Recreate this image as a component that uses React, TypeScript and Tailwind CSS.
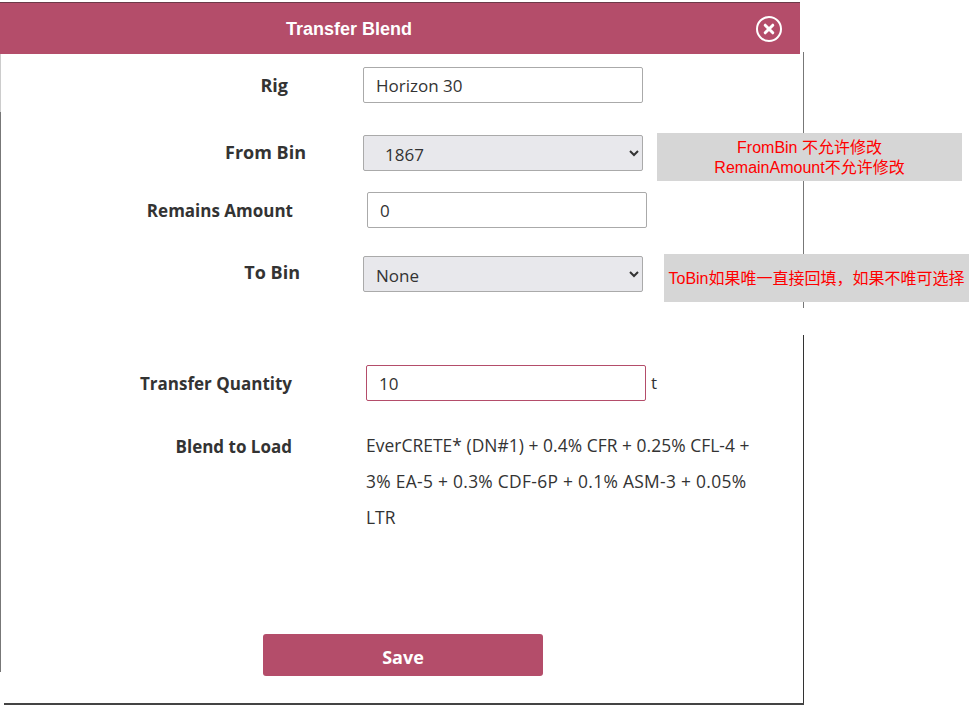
function Label({ children, className }: { children: string; className: string }) {
  return <div className={`font-bold text-[#333] whitespace-nowrap text-right ${className}`}>{children}</div>;
}

export default function App() {
  return (
    <div className="relative w-[972px] h-[705px] overflow-hidden bg-white text-[17px] text-[#333] font-['Open_Sans','Noto_Sans_CJK_SC',sans-serif]">
      <div className="w-[804px] h-[705px] pt-[2px] flex flex-col">
        {/* Header */}
        <div className="w-[800px] h-[52px] shrink-0 bg-[#b44d6a] border-t border-[#6b3a48] flex items-center">
          <h1 className="ml-[286px] mt-[1px] text-[18px] font-bold text-white font-['Liberation_Sans',sans-serif]">Transfer Blend</h1>
          <button className="ml-auto mr-[18px] w-[26px] h-[26px] rounded-full border-2 border-white flex items-center justify-center text-white">
            <svg width="12" height="12" viewBox="0 0 12 12">
              <path d="M2.2 2.2 L9.8 9.8 M9.8 2.2 L2.2 9.8" stroke="currentColor" strokeWidth="3" strokeLinecap="round" />
            </svg>
          </button>
        </div>

        {/* Form */}
        <div className="flex items-center mt-[13px] h-[36px]">
          <Label className="w-[288px] text-[18px]">Rig</Label>
          <input readOnly defaultValue="Horizon 30" className="ml-[75px] w-[280px] h-[36px] border border-[#aaa] rounded-[2px] pl-[12px]" />
        </div>
        <div className="flex items-center mt-[32px] h-[36px]">
          <Label className="w-[306px] -mt-[1px] text-[18px]">From Bin</Label>
          <select defaultValue="1867" className="ml-[57px] w-[280px] h-[36px] border border-[#aaa] rounded-[2px] bg-[#e8e8ec] pl-[17px] pt-[2px]">
            <option>1867</option>
          </select>
        </div>
        <div className="flex items-center mt-[21px] h-[36px]">
          <Label className="w-[293px] mt-[1px]">Remains Amount</Label>
          <input readOnly defaultValue="0" className="ml-[74px] w-[280px] h-[36px] border border-[#aaa] rounded-[2px] pl-[12px]" />
        </div>
        <div className="flex items-center mt-[28px] h-[36px]">
          <Label className="w-[300px] -mt-[3px] text-[18px]">To Bin</Label>
          <select defaultValue="None" className="ml-[63px] w-[280px] h-[36px] border border-[#aaa] rounded-[2px] bg-[#e8e8ec] pl-[8px] pt-[2px]">
            <option>None</option>
          </select>
        </div>
        <div className="flex items-center mt-[73px] h-[36px]">
          <Label className="w-[292px] mt-[1px]">Transfer Quantity</Label>
          <input readOnly defaultValue="10" className="ml-[74px] w-[280px] h-[36px] border border-[#b44d6a] rounded-[2px] pl-[12px]" />
          <span className="ml-[5px]">t</span>
        </div>
        <div className="flex mt-[27px]">
          <Label className="w-[292px] leading-[36px] mt-[1px]">Blend to Load</Label>
          <p className="ml-[74px] w-[400px] leading-[36px] text-[17.4px] -mt-[1px]">
            <span className="tracking-[0.05px]">EverCRETE* (DN#1) + 0.4% CFR + 0.25% CFL-4 +</span>
            <br />
            <span className="tracking-[0.3px]">3% EA-5 + 0.3% CDF-6P + 0.1% ASM-3 + 0.05%</span>
            <br />
            LTR
          </p>
        </div>
        <button className="mt-[99px] ml-[263px] w-[280px] h-[42px] pt-[5px] rounded-[3px] bg-[#b44d6a] text-white font-bold text-[18px]">Save</button>
      </div>

      {/* Edges of the window behind */}
      <div className="absolute left-0 top-[54px] w-[1px] h-[58px] bg-[#ccc]" />
      <div className="absolute left-0 top-[112px] w-[1px] h-[560px] bg-[#777]" />
      <div className="absolute left-[803px] top-[52px] w-[1px] h-[256px] bg-[#777]" />
      <div className="absolute left-[803px] top-[335px] w-[1px] h-[370px] bg-[#333]" />
      <div className="absolute left-[4px] top-[703px] w-[800px] h-[2px] bg-[#444]" />

      {/* Annotations */}
      <div className="absolute left-[657px] top-[133px] w-[305px] h-[48px] pt-[2px] bg-[#d6d6d6] text-[#f00] text-[16px] leading-[20px] text-center flex flex-col justify-center font-['Liberation_Sans','Noto_Sans_CJK_SC',sans-serif]">
        <div>FromBin 不允许修改</div>
        <div>RemainAmount不允许修改</div>
      </div>
      <div className="absolute left-[664px] top-[254px] w-[305px] h-[48px] pt-[2px] bg-[#d6d6d6] text-[#f00] text-[16px] text-center flex items-center justify-center whitespace-nowrap font-['Liberation_Sans','Noto_Sans_CJK_SC',sans-serif]">
        ToBin如果唯一直接回填，如果不唯可选择
      </div>
    </div>
  );
}
